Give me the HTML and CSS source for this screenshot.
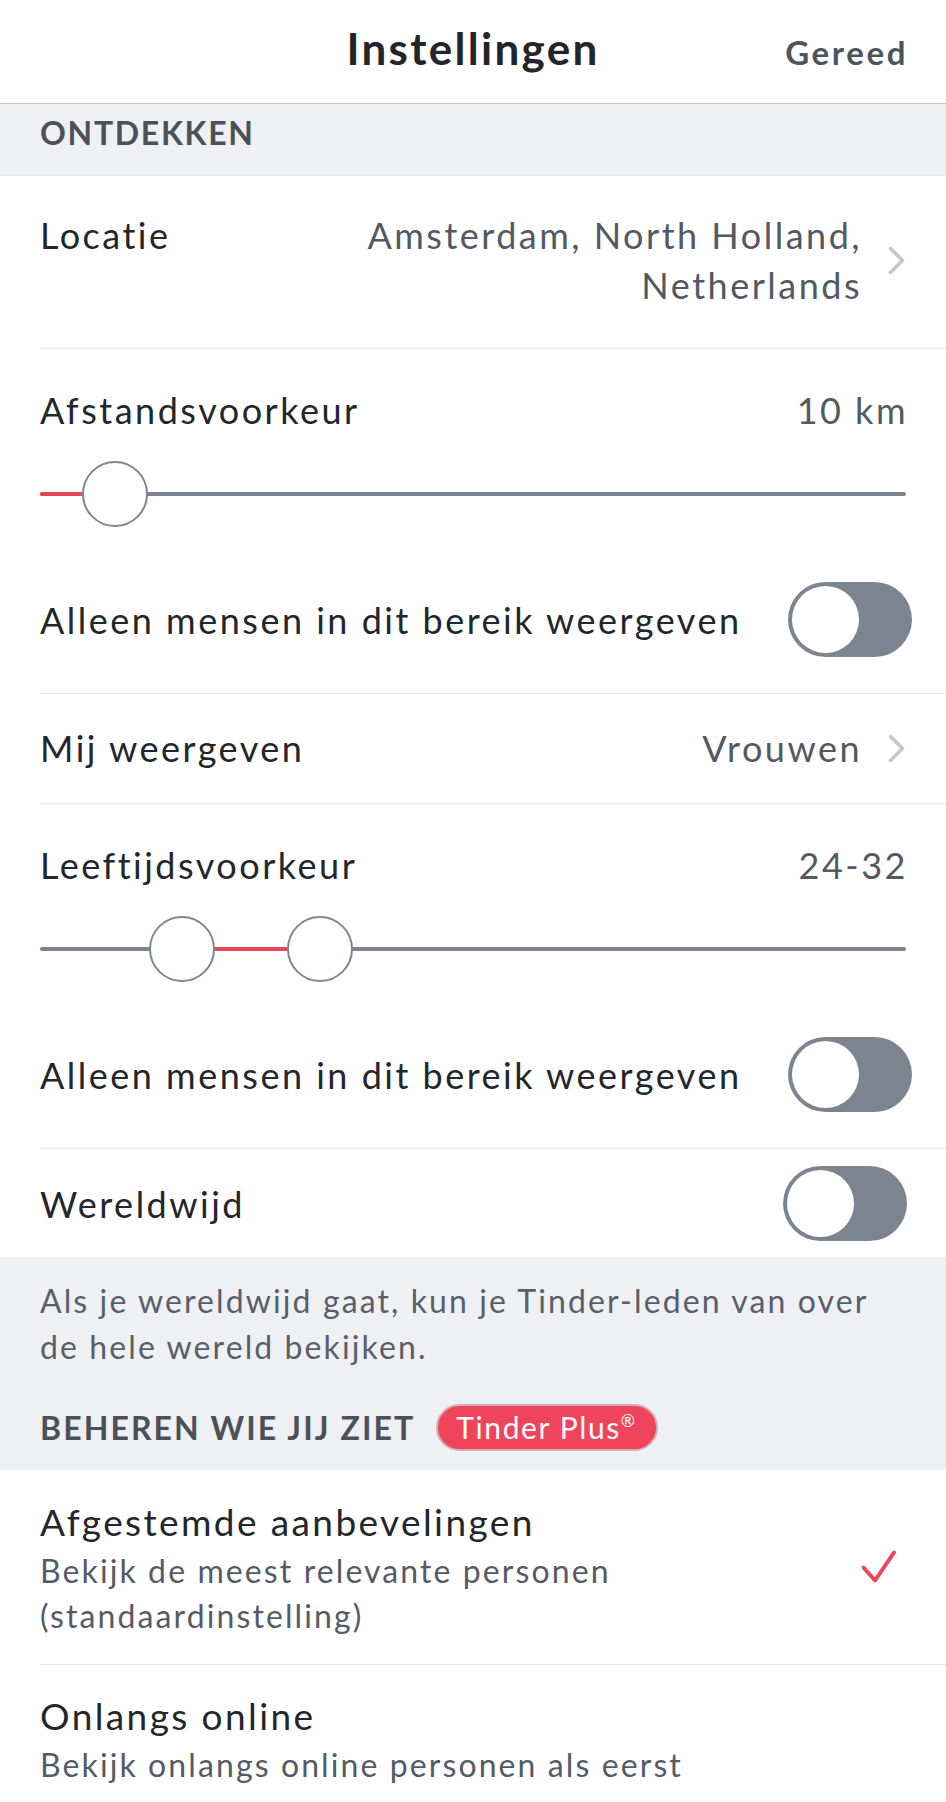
FILE: index.html
```html
<!DOCTYPE html>
<html lang="nl">
<head>
  <meta charset="UTF-8">
  <title>Instellingen</title>
  <link rel="stylesheet" href="styles.css">
</head>
<body>
  <header class="topbar">
    <span></span>
    <h1 class="title">Instellingen</h1>
    <a class="done" href="#">Gereed</a>
  </header>

  <div class="section-head">ONTDEKKEN</div>

  <div class="group">
    <div class="row row-location">
      <span class="label">Locatie</span>
      <span class="value value-multi">Amsterdam, North Holland,<br>Netherlands</span>
      <svg class="chevron" width="17" height="29" viewBox="0 0 17 29"><path d="M2.5 2.5 L14.5 14.5 L2.5 26.5" fill="none" stroke="#c5c6ca" stroke-width="3.5" stroke-linecap="round" stroke-linejoin="round"/></svg>
    </div>

    <div class="row row-range">
      <div class="range-head">
        <span class="label">Afstandsvoorkeur</span>
        <span class="value">10 km</span>
      </div>
      <div class="slider">
        <div class="track"></div>
        <div class="fill" style="left:0;width:42px"></div>
        <div class="knob" style="left:42px"></div>
      </div>
      <div class="toggle-line">
        <span class="label">Alleen mensen in dit bereik weergeven</span>
        <span class="toggle"><span class="toggle-knob"></span></span>
      </div>
    </div>

    <div class="row row-link">
      <span class="label">Mij weergeven</span>
      <span class="value">Vrouwen</span>
      <svg class="chevron" width="17" height="29" viewBox="0 0 17 29"><path d="M2.5 2.5 L14.5 14.5 L2.5 26.5" fill="none" stroke="#c5c6ca" stroke-width="3.5" stroke-linecap="round" stroke-linejoin="round"/></svg>
    </div>

    <div class="row row-range">
      <div class="range-head">
        <span class="label">Leeftijdsvoorkeur</span>
        <span class="value">24-32</span>
      </div>
      <div class="slider">
        <div class="track"></div>
        <div class="fill" style="left:175px;width:72px"></div>
        <div class="knob" style="left:109px"></div>
        <div class="knob" style="left:247px"></div>
      </div>
      <div class="toggle-line">
        <span class="label">Alleen mensen in dit bereik weergeven</span>
        <span class="toggle"><span class="toggle-knob"></span></span>
      </div>
    </div>

    <div class="row row-switch">
      <span class="label">Wereldwijd</span>
      <span class="toggle"><span class="toggle-knob"></span></span>
    </div>
  </div>

  <div class="footer-note">
    <p class="note">Als je wereldwijd gaat, kun je Tinder-leden van over de hele wereld bekijken.</p>
    <div class="section-head-inline">
      <span>BEHEREN WIE JIJ ZIET</span>
      <span class="badge">Tinder Plus<sup>®</sup></span>
    </div>
  </div>

  <div class="group">
    <div class="row row-option first-option">
      <div class="option-text">
        <div class="option-title">Afgestemde aanbevelingen</div>
        <div class="option-sub">Bekijk de meest relevante personen<br>(standaardinstelling)</div>
      </div>
      <svg class="check" width="37" height="36" viewBox="0 0 37 36"><path d="M3.5 18.5 L15 31.5 L34 3.5" fill="none" stroke="#f0445c" stroke-width="4" stroke-linecap="round" stroke-linejoin="round"/></svg>
    </div>
    <div class="row row-option last-option">
      <div class="option-text">
        <div class="option-title">Onlangs online</div>
        <div class="option-sub">Bekijk onlangs online personen als eerst</div>
      </div>
    </div>
  </div>
</body>
</html>
```

FILE: styles.css
```css
body {
  margin: 0;
  background: #ffffff;
  font-family: "Lato", "Liberation Sans", sans-serif;
  color: #23262b;
}

.topbar {
  display: grid;
  grid-template-columns: 1fr auto 1fr;
  align-items: baseline;
  height: 104px;
  padding: 22px 40px 0;
  box-sizing: border-box;
  border-bottom: 1px solid #c8c9cd;
}

.title {
  margin: 0;
  font-size: 44px;
  line-height: 52px;
  font-weight: 700;
  letter-spacing: 2.3px;
  color: #22252a;
}

.done {
  justify-self: end;
  font-size: 33px;
  font-weight: 700;
  letter-spacing: 2.6px;
  margin-right: -2px;
  color: #4f545c;
  text-decoration: none;
}

.section-head {
  background: #eff0f4;
  height: 72px;
  box-sizing: border-box;
  padding: 9px 40px 0;
  font-size: 32px;
  line-height: 40px;
  font-weight: 700;
  letter-spacing: 1.7px;
  color: #4b5059;
  border-bottom: 1px solid #e6e7eb;
}

.row {
  margin-left: 40px;
  padding-right: 40px;
  border-bottom: 1px solid #e4e5e9;
  font-size: 36px;
  line-height: 50px;
  letter-spacing: 2.5px;
}

.group .row:last-child {
  border-bottom: none;
}

.label {
  color: #23262b;
}

.value {
  color: #535963;
}

.row-location {
  display: flex;
  align-items: flex-start;
  padding-top: 34px;
  padding-bottom: 38px;
  height: 100px;
}

.row-location .label {
  flex: 1;
}

.value-multi {
  text-align: right;
}

.chevron {
  flex: none;
  align-self: center;
  margin-left: 26px;
  margin-right: 1px;
}

.row-link {
  display: flex;
  align-items: center;
  padding-top: 29px;
  padding-bottom: 30px;
}

.row-link .label {
  flex: 1;
}

.row-range {
  padding-top: 36px;
  padding-bottom: 36px;
}

.range-head {
  display: flex;
  justify-content: space-between;
}

.range-head .value {
  margin-right: -2px;
}

.slider {
  position: relative;
  height: 66px;
  margin-top: 26px;
}

.track {
  position: absolute;
  left: 0;
  right: 0;
  top: 31px;
  height: 4px;
  border-radius: 2px;
  background: #7b838e;
}

.fill {
  position: absolute;
  top: 31px;
  height: 4px;
  border-radius: 2px;
  background: #e9435a;
}

.knob {
  position: absolute;
  top: 0;
  width: 66px;
  height: 66px;
  box-sizing: border-box;
  border: 2px solid #80868f;
  border-radius: 50%;
  background: #ffffff;
}

.toggle-line {
  display: flex;
  align-items: center;
  justify-content: space-between;
  margin-top: 55px;
  height: 75px;
}

.toggle {
  flex: none;
  width: 124px;
  height: 75px;
  box-sizing: border-box;
  padding: 4px;
  border-radius: 38px;
  background: #7c8490;
  margin-right: -6px;
}

.toggle-knob {
  display: block;
  width: 67px;
  height: 67px;
  border-radius: 50%;
  background: #ffffff;
}

.row-switch {
  display: flex;
  align-items: center;
  justify-content: space-between;
  padding-top: 17px;
  padding-bottom: 16px;
}

.row-switch .toggle {
  margin-right: -1px;
}

.footer-note {
  background: #eff0f4;
  padding: 21px 40px 19px;
}

.note {
  margin: 0;
  font-size: 32px;
  line-height: 46px;
  letter-spacing: 2.1px;
  color: #595f69;
}

.section-head-inline {
  display: flex;
  align-items: center;
  margin-top: 34px;
  height: 47px;
  font-size: 32px;
  font-weight: 700;
  letter-spacing: 2.1px;
  color: #4b5059;
}

.badge {
  margin-left: 21px;
  height: 47px;
  box-sizing: border-box;
  padding: 0 19px 0 18px;
  border: 2px solid #cfaeb4;
  border-radius: 24px;
  background: #f0445c;
  color: #ffffff;
  font-size: 30px;
  font-weight: 400;
  line-height: 43px;
  letter-spacing: 1.6px;
}

.badge sup {
  font-size: 17px;
  vertical-align: 12px;
  line-height: 0;
}

.row-option {
  display: flex;
  align-items: center;
  justify-content: space-between;
}

.first-option {
  padding-top: 25px;
  padding-bottom: 26px;
}

.last-option {
  padding-top: 24px;
  padding-bottom: 20px;
}

.option-title {
  font-size: 37px;
  line-height: 53px;
  letter-spacing: 2.4px;
  color: #23262b;
}

.option-sub {
  font-size: 32px;
  line-height: 45px;
  letter-spacing: 2.1px;
  color: #555b66;
}

.check {
  flex: none;
  margin-right: 9px;
}
```
